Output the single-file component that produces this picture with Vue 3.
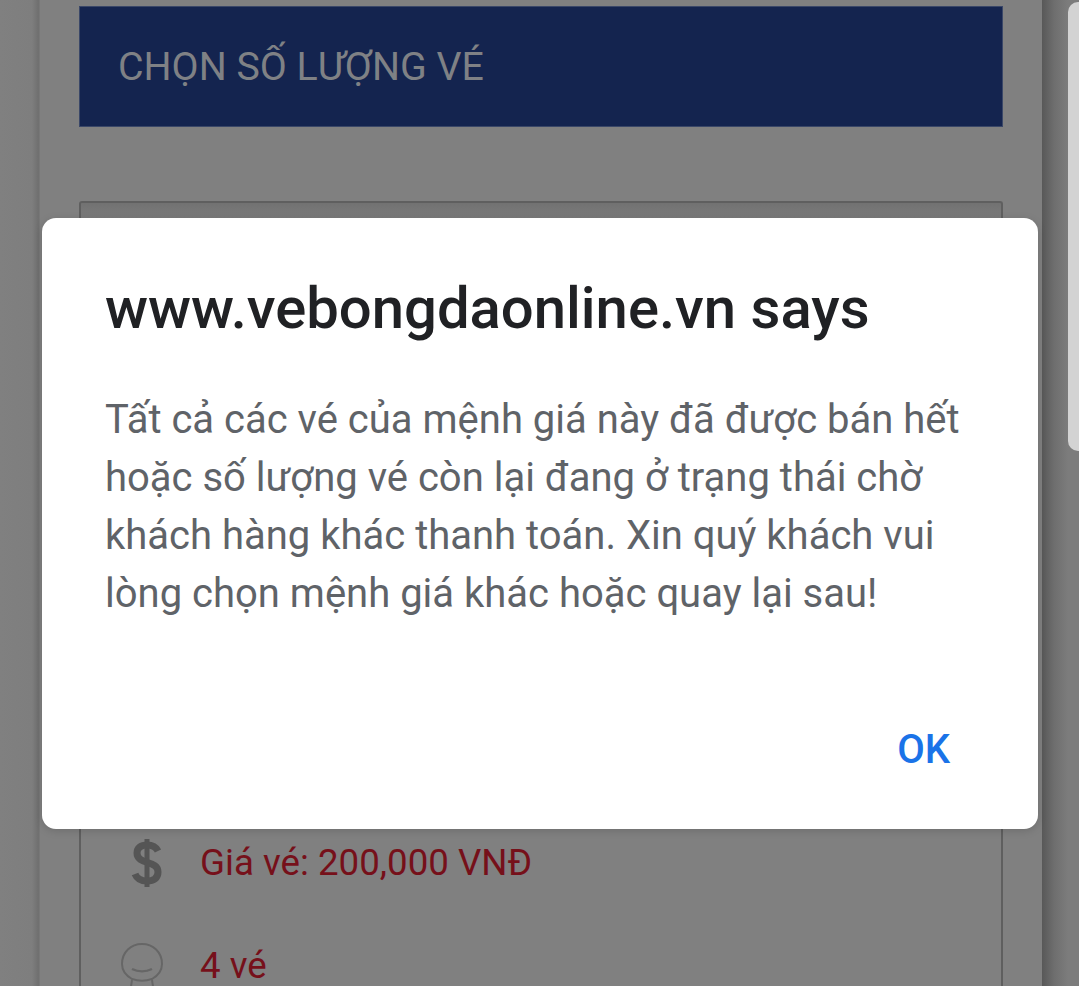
<script setup>
const bodyLines = [
  'Tất cả các vé của mệnh giá này đã được bán hết',
  'hoặc số lượng vé còn lại đang ở trạng thái chờ',
  'khách hàng khác thanh toán. Xin quý khách vui',
  'lòng chọn mệnh giá khác hoặc quay lại sau!'
]
</script>

<template>
  <div class="page">
    <main class="sheet">
      <header class="banner">CHỌN SỐ LƯỢNG VÉ</header>
      <section class="card">
        <div class="row price">
          <svg class="icon dollar" viewBox="0 0 40 54" width="40" height="54">
            <path d="M20 3v48" stroke="#555" stroke-width="5" fill="none" />
            <path d="M31 15c-2-4-6-6-11-6-6 0-10 3-10 8 0 12 21 7 21 19 0 6-4 9-11 9-6 0-10-2-12-7" stroke="#555" stroke-width="7" fill="none" />
          </svg>
          <span>Giá vé: 200,000 VNĐ</span>
        </div>
        <div class="row seats">
          <svg class="icon seat" viewBox="0 0 42 50" width="42" height="50">
            <path d="M11 36C4 32 1 27 1 21 1 9 10 1 21 1s20 8 20 20c0 6-3 11-10 15-6 2-14 2-20 0z" stroke="#666" stroke-width="2" fill="none" />
            <path d="M11 26c6 3 14 3 20 0" stroke="#666" stroke-width="2.5" fill="none" />
            <path d="M11 37l-2 13M31 37l2 13" stroke="#666" stroke-width="2" fill="none" />
          </svg>
          <span>4 vé</span>
        </div>
      </section>
    </main>
    <aside class="rail"><div class="thumb"></div></aside>
    <div class="dialog" role="alertdialog">
      <h1 class="title">www.vebongdaonline.vn says</h1>
      <p class="message">
        <span v-for="line in bodyLines" :key="line" class="line">{{ line }}</span>
      </p>
      <div class="actions"><button class="ok">OK</button></div>
    </div>
  </div>
</template>

<style>
html, body { margin: 0; background: #7d7d7d; }
</style>

<style scoped>
.page {
  position: relative;
  display: flex;
  width: 1079px;
  height: 986px;
  overflow: hidden;
  background: linear-gradient(90deg, #808080 0, #7e7e7e 32px, #707070 38px);
  font-family: Roboto, "Noto Sans", sans-serif;
}
.sheet {
  box-sizing: border-box;
  flex: none;
  width: 1003px;
  margin-left: 39px;
  padding: 6px 39px 0;
  background: #808080;
  border-left: 1px solid #777;
}
.banner {
  box-sizing: border-box;
  height: 121px;
  padding-left: 38px;
  display: flex;
  align-items: center;
  background: #14244f;
  border: 1px solid #3a4768;
  color: #7f8185;
  font-size: 39.3px;
}
.card {
  box-sizing: border-box;
  height: 785px;
  margin-top: 74px;
  padding: 630px 0 0 40px;
  overflow: hidden;
  border: 2px solid #5f5f5f;
  border-bottom: 0;
  border-radius: 3px 3px 0 0;
  background: linear-gradient(180deg, #727272, #808080 24px);
}
.row {
  display: flex;
  align-items: center;
  color: #76101a;
  font-size: 36.7px;
  line-height: 36px;
}
.icon { flex: none; }
.dollar { filter: blur(0.7px); }
.price { height: 60px; padding-left: 6px; }
.price span { margin-left: 33px; }
.seats { height: 38px; margin-top: 55px; align-items: flex-start; }
.seat { margin-top: -5px; }
.seats span { margin-left: 37px; }
.rail {
  flex: 1;
  display: flex;
  justify-content: flex-end;
  align-items: flex-start;
  background: linear-gradient(90deg, #585858 0, #6e6e6e 12px, #7c7c7c 26px);
}
.thumb {
  box-sizing: border-box;
  width: 11px;
  height: 449px;
  margin-top: 2px;
  background: #d3d3d3;
  border-radius: 10px 0 0 10px;
}
.dialog {
  position: absolute;
  left: 42px;
  top: 218px;
  box-sizing: border-box;
  width: 996px;
  height: 611px;
  padding: 57px 63px 0;
  background: #fff;
  border-radius: 14px;
  box-shadow: 0 2px 8px rgba(0, 0, 0, 0.15);
}
.title {
  margin: 0;
  color: #202124;
  font-size: 58px;
  font-weight: 500;
  line-height: 66px;
  white-space: nowrap;
}
.message {
  margin: 50px 0 0;
  color: #5f6368;
  font-size: 40px;
  line-height: 58px;
}
.line { display: block; white-space: nowrap; }
.actions {
  display: flex;
  justify-content: flex-end;
  margin: 100px 25px 0 0;
}
.ok {
  padding: 0;
  border: 0;
  background: none;
  color: #1a73e8;
  font: 500 40px/54px Roboto, sans-serif;
}
</style>
